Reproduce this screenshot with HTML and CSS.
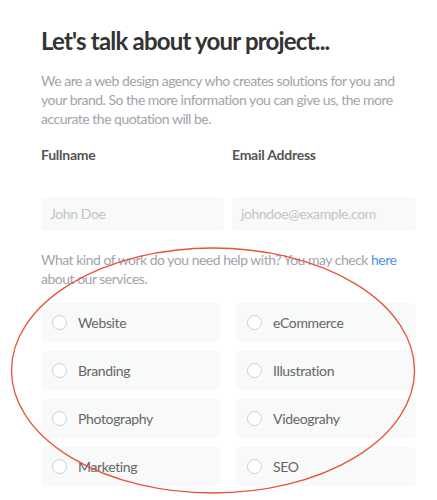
FILE: index.html
```html
<!DOCTYPE html>
<html>
<head>
<meta charset="utf-8">
<link rel="stylesheet" href="styles.css">
</head>
<body>
<div class="page">
  <h1 class="title">Let's talk about your project...</h1>
  <p class="intro">We are a web design agency who creates solutions for you and your brand. So the more information you can give us, the more accurate the quotation will be.</p>
  <div class="fields">
    <div class="field">
      <div class="label">Fullname</div>
      <div class="input">John Doe</div>
    </div>
    <div class="field">
      <div class="label">Email Address</div>
      <div class="input">johndoe@example.com</div>
    </div>
  </div>
  <p class="question">What kind of work do you need help with? You may check <span class="link">here</span> about our services.</p>
  <div class="options">
    <div class="option"><span class="radio"></span><span>Website</span></div>
    <div class="option"><span class="radio"></span><span>eCommerce</span></div>
    <div class="option"><span class="radio"></span><span>Branding</span></div>
    <div class="option"><span class="radio"></span><span>Illustration</span></div>
    <div class="option"><span class="radio"></span><span>Photography</span></div>
    <div class="option"><span class="radio"></span><span>Videograhy</span></div>
    <div class="option"><span class="radio"></span><span>Marketing</span></div>
    <div class="option"><span class="radio"></span><span>SEO</span></div>
  </div>
  <svg class="annotation" width="437" height="500" viewBox="0 0 437 500">
    <ellipse cx="213" cy="370.5" rx="201.5" ry="122.5" fill="none" stroke="#e9523a" stroke-width="1.3"/>
  </svg>
</div>
</body>
</html>
```

FILE: styles.css
```css
html, body {
  margin: 0;
  padding: 0;
  background: #ffffff;
}
body {
  font-family: Lato, "Open Sans", sans-serif;
  width: 437px;
  height: 500px;
  overflow: hidden;
}
.page {
  position: relative;
  padding: 26px 21px 0 41px;
  height: 500px;
  box-sizing: border-box;
}
.title {
  margin: 0;
  font-size: 24px;
  line-height: 29px;
  font-weight: 700;
  color: #333333;
  letter-spacing: -0.8px;
}
.intro {
  margin: 16px 0 0;
  font-size: 14px;
  line-height: 19px;
  color: #a3a3ab;
  letter-spacing: -0.5px;
}
.fields {
  display: grid;
  grid-template-columns: 183px 184px;
  column-gap: 8px;
  margin-top: 17px;
}
.label {
  font-size: 14px;
  line-height: 19px;
  font-weight: 700;
  color: #555555;
  margin-bottom: 33px;
  letter-spacing: -0.25px;
}
.input {
  height: 34px;
  line-height: 34px;
  background: #f8f9f9;
  border-radius: 4px;
  padding-left: 9px;
  font-size: 14px;
  color: #c4c4c4;
  letter-spacing: -0.4px;
}
.question {
  margin: 19px 0 0;
  font-size: 14px;
  line-height: 19px;
  color: #a3a3ab;
  letter-spacing: -0.5px;
}
.link {
  color: #4b94e8;
}
.options {
  display: grid;
  grid-template-columns: 179px 180px;
  column-gap: 16px;
  row-gap: 9px;
  margin-top: 15px;
}
.option {
  height: 39px;
  background: #f8f9f9;
  border-radius: 5px;
  display: flex;
  align-items: center;
  gap: 11px;
  padding-left: 11px;
  font-size: 14px;
  color: #666666;
  letter-spacing: -0.35px;
}
.radio {
  width: 13px;
  height: 13px;
  border: 1.5px solid #cfcfcf;
  border-radius: 50%;
  background: #ffffff;
  flex: none;
}
.annotation {
  position: absolute;
  left: 0;
  top: 0;
  pointer-events: none;
}
```
